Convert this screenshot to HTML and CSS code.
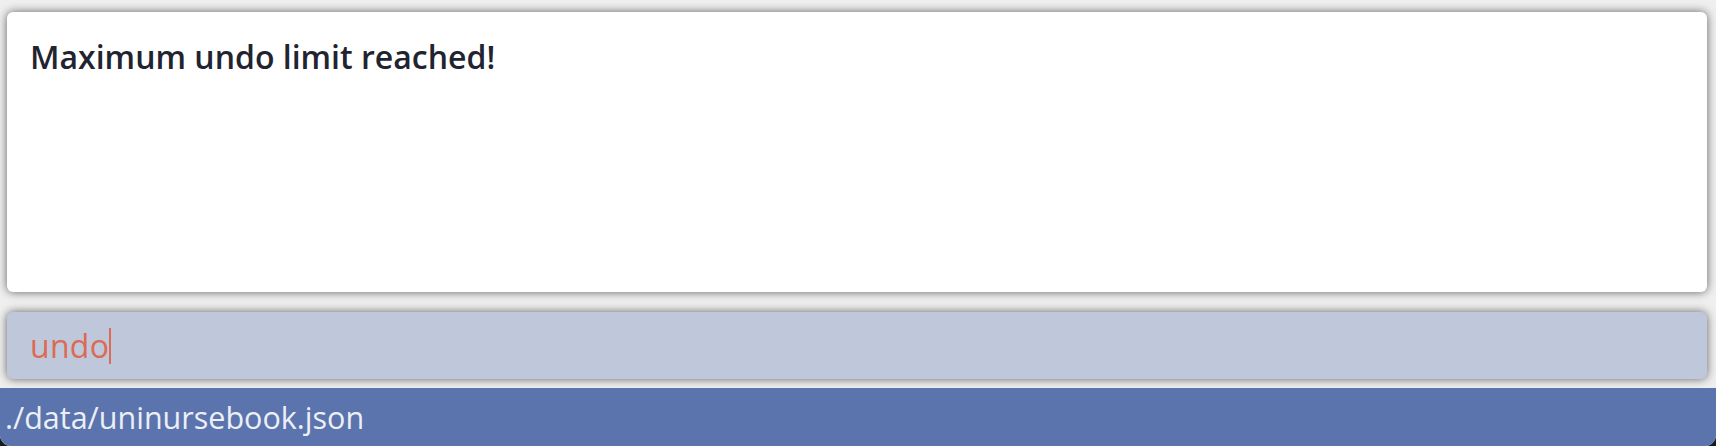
FILE: index.html
```html
<!DOCTYPE html>
<html>
<head>
<meta charset="utf-8">
<link rel="stylesheet" href="styles.css">
</head>
<body>
<div class="app">
  <div class="result">
    <div class="result-text">Maximum undo limit reached!</div>
  </div>
  <div class="command">
    <span class="command-text">undo</span><span class="caret"></span>
  </div>
  <div class="status">./data/uninursebook.json</div>
</div>
</body>
</html>
```
FILE: styles.css
```css
html, body {
  margin: 0;
  padding: 0;
  background: #161a1c;
}
.app {
  width: 1716px;
  height: 446px;
  box-sizing: border-box;
  background: #efefef;
  display: flex;
  flex-direction: column;
  border-radius: 0 0 11px 11px;
  overflow: hidden;
  font-family: "Open Sans", "Noto Sans", sans-serif;
}
.result {
  margin: 12px 9px 0 7px;
  height: 280px;
  flex: none;
  box-sizing: border-box;
  background: #ffffff;
  border-radius: 6px;
  box-shadow: 0 0 10px rgba(0, 0, 0, 0.6);
  padding: 29px 23px;
}
.result-text {
  font-size: 32px;
  font-weight: 600;
  color: #1f2430;
  line-height: 1;
}
.command {
  margin: 20px 9px 0 7px;
  height: 67px;
  flex: none;
  box-sizing: border-box;
  background: #bfc8db;
  border-radius: 6px;
  box-shadow: 0 0 10px rgba(0, 0, 0, 0.6);
  padding: 0 23px;
  display: flex;
  align-items: center;
}
.command-text {
  font-size: 32px;
  color: #dd6a52;
  letter-spacing: 0.3px;
}
.caret {
  width: 2px;
  height: 36px;
  background: #dd6a52;
  margin-left: 0;
}
.status {
  margin-top: 9px;
  flex: 1;
  background: #5b74ad;
  color: #eceff6;
  font-size: 30.5px;
  padding-left: 5px;
  display: flex;
  align-items: center;
}
```
